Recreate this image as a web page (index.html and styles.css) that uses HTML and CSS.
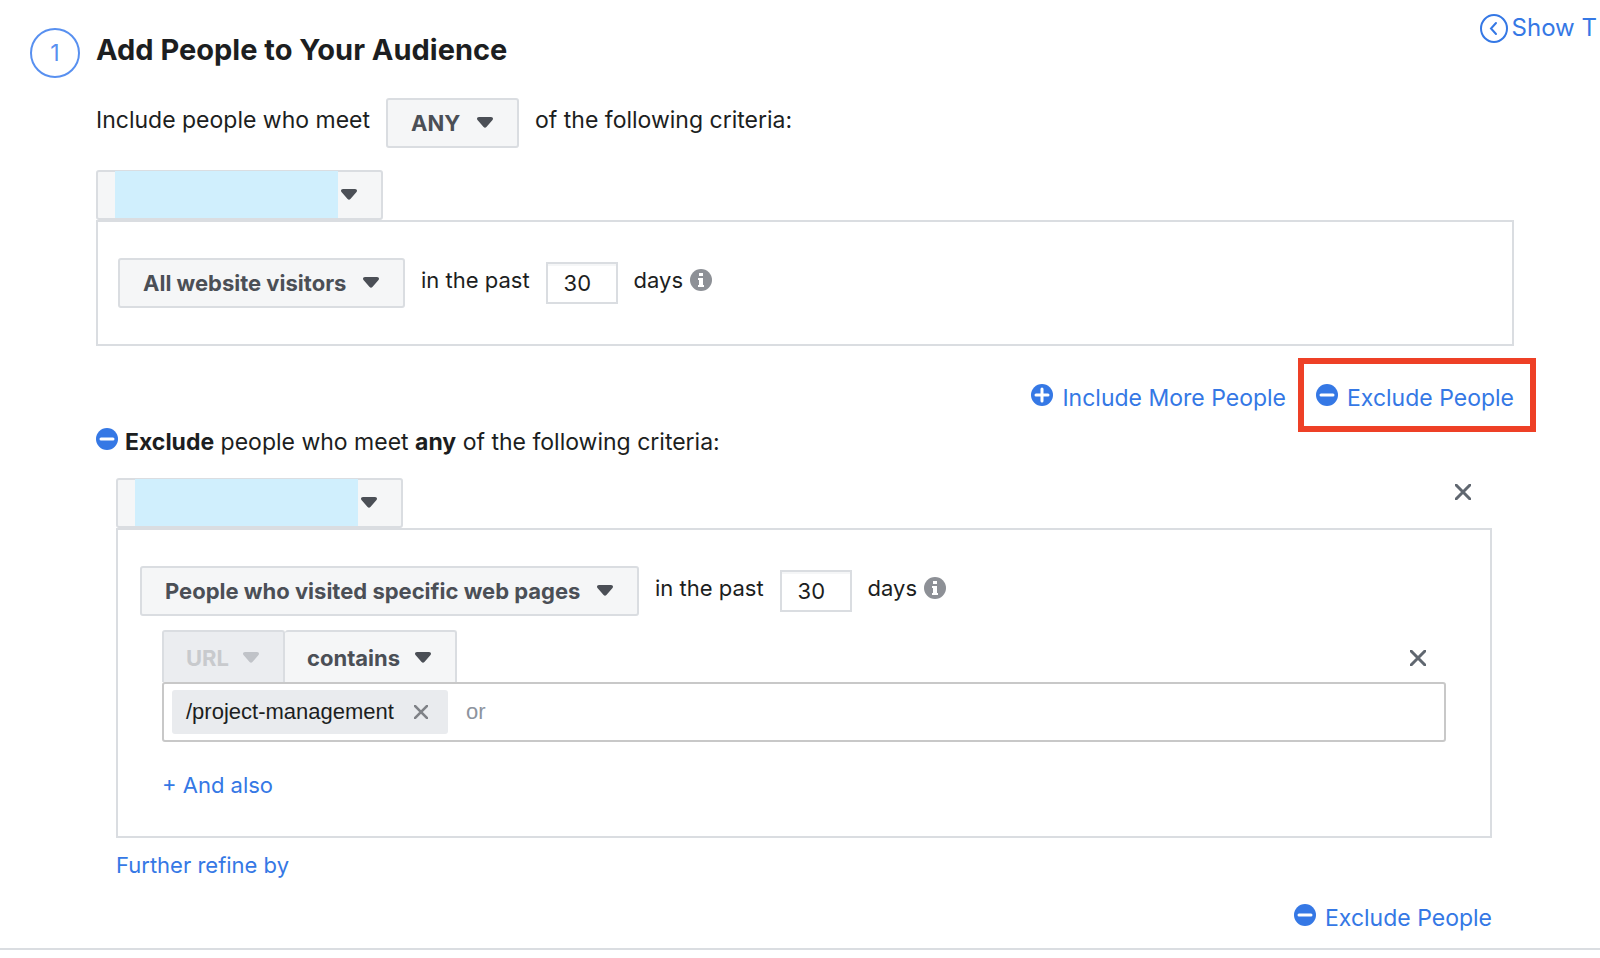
FILE: index.html
```
<!DOCTYPE html>
<html lang="en">
<head>
    <meta charset="UTF-8">
    <title>Create Audience</title>
    <link rel="stylesheet" href="styles.css">
</head>
<body>
<svg class="sprite" aria-hidden="true">
    <symbol id="caret" viewBox="0 0 16 11">
        <path d="M2 0h12c2 0 2.600 2 1.300 3.300L9.400 10q-1.400 1.300-2.800 0L.7 3.300C-.6 2 0 0 2 0z" fill="currentColor"/>
    </symbol>
    <symbol id="minus" viewBox="0 0 22 22">
        <circle cx="11" cy="11" r="11" fill="currentColor"/>
        <path d="M5 11h12" stroke="#fff" stroke-width="3" stroke-linecap="round"/>
    </symbol>
    <symbol id="plus" viewBox="0 0 22 22">
        <circle cx="11" cy="11" r="11" fill="currentColor"/>
        <path d="M5 11h12M11 5v12" stroke="#fff" stroke-width="3" stroke-linecap="round"/>
    </symbol>
    <symbol id="info" viewBox="0 0 22 22">
        <circle cx="11" cy="11" r="11" fill="currentColor"/>
        <path d="M9 4h4v3H9zM8 9h5v7h1v2H8v-2h1v-5H8z" fill="#fff"/>
    </symbol>
    <symbol id="cross" viewBox="0 0 16 16">
        <path d="M1 1l14 14M15 1L1 15" stroke="currentColor" stroke-width="3" stroke-linecap="round"/>
    </symbol>
</svg>

<main class="step">
    <a class="show-link" href="#">
        <svg width="28" height="29" viewBox="0 0 28 29" fill="none" stroke="currentColor" stroke-width="2">
            <ellipse cx="14" cy="14.500" rx="13" ry="13.500"/>
            <path d="M16 9l-5 5.500 5 5.500" stroke-linecap="round"/>
        </svg>
        Show T
    </a>
    <div class="step-number">1</div>
    <div class="step-content">
        <h1 class="title">Add People to Your Audience</h1>

        <div class="row include-row">
            <label class="row-text" for="match">Include people who meet</label>
            <span class="dropdown">
                <select id="match"><option>ANY</option></select>
                <svg class="caret"><use href="#caret"/></svg>
            </span>
            <span class="row-text">of the following criteria:</span>
        </div>

        <span class="dropdown source">
            <select aria-label="Source"><option></option></select>
            <span class="source-mask"></span>
            <svg class="caret"><use href="#caret"/></svg>
        </span>
        <section class="panel">
            <div class="row">
                <span class="dropdown">
                    <select aria-label="Visitors"><option>All website visitors</option></select>
                    <svg class="caret"><use href="#caret"/></svg>
                </span>
                <label class="row-text small" for="days-in">in the past</label>
                <input class="days" id="days-in" type="text" value="30">
                <span class="row-text small">days <svg class="icon info"><use href="#info"/></svg></span>
            </div>
        </section>

        <div class="actions">
            <a class="action" href="#"><svg class="icon"><use href="#plus"/></svg>Include More People</a>
            <a class="action highlighted" href="#"><svg class="icon"><use href="#minus"/></svg>Exclude People</a>
        </div>

        <h2 class="exclude-title"><svg class="icon"><use href="#minus"/></svg><span><b>Exclude</b> people who meet <b>any</b> of the following criteria:</span></h2>

        <div class="exclude">
            <div class="exclude-head">
                <span class="dropdown source">
                    <select aria-label="Excluded source"><option></option></select>
                    <span class="source-mask"></span>
                    <svg class="caret"><use href="#caret"/></svg>
                </span>
                <button class="close" type="button" aria-label="Remove group"><svg><use href="#cross"/></svg></button>
            </div>
            <section class="panel">
                <div class="row">
                    <span class="dropdown">
                        <select aria-label="Excluded visitors"><option>People who visited specific web pages</option></select>
                        <svg class="caret"><use href="#caret"/></svg>
                    </span>
                    <label class="row-text small" for="days-ex">in the past</label>
                    <input class="days" id="days-ex" type="text" value="30">
                    <span class="row-text small">days <svg class="icon info"><use href="#info"/></svg></span>
                </div>
                <div class="rule">
                    <div class="rule-head">
                        <span class="dropdown">
                            <select aria-label="Field" disabled><option>URL</option></select>
                            <svg class="caret"><use href="#caret"/></svg>
                        </span>
                        <span class="dropdown">
                            <select aria-label="Operator"><option>contains</option></select>
                            <svg class="caret"><use href="#caret"/></svg>
                        </span>
                        <button class="close" type="button" aria-label="Remove rule"><svg><use href="#cross"/></svg></button>
                    </div>
                    <div class="tokens">
                        <span class="token">/project-management
                            <button class="close" type="button" aria-label="Remove value"><svg><use href="#cross"/></svg></button>
                        </span>
                        <input class="token-input" type="text" placeholder="or" aria-label="Add value">
                    </div>
                    <a class="text-link" href="#">+ And also</a>
                </div>
            </section>
            <a class="text-link refine" href="#">Further refine by</a>
            <div class="actions">
                <a class="action" href="#"><svg class="icon"><use href="#minus"/></svg>Exclude People</a>
            </div>
        </div>
    </div>
</main>
</body>
</html>
```
FILE: styles.css
```
*, ::before, ::after {
    box-sizing: border-box;
}

* {
    margin: 0;
}

body {
    background: #fff;
    color: #1c1e21;
    font-family: Inter, "Liberation Sans", sans-serif;
    font-size: 23px;
    line-height: 32px;
    overflow-x: hidden;
}

a {
    color: #3578e5;
    text-decoration: none;
}

svg {
    display: block;
    flex: none;
}

.sprite {
    position: absolute;
    width: 0;
    height: 0;
}

.step {
    position: relative;
    display: flex;
    gap: 15px;
    padding: 28px 86px 14px 30px;
    border-bottom: 2px solid #dadde1;
}

.show-link {
    position: absolute;
    top: 12px;
    right: 3px;
    display: flex;
    align-items: center;
    gap: 4px;
    font-size: 24px;
    white-space: nowrap;
}

.step-number {
    flex: none;
    width: 50px;
    height: 50px;
    border: 2px solid #5890f0;
    border-radius: 50%;
    color: #5890f0;
    line-height: 46px;
    text-align: center;
}

.step-content {
    flex: 1;
    min-width: 0;
}

.title {
    padding-top: 4px;
    font-size: 29px;
    font-weight: 700;
    line-height: 36px;
}

.row {
    display: flex;
    align-items: center;
    gap: 16px;
}

.include-row {
    margin: 30px 0 22px;
}

.row-text {
    display: flex;
    align-items: center;
    gap: 7px;
    padding-bottom: 6px;
    white-space: nowrap;
}

.small {
    font-size: 22px;
}

.dropdown {
    position: relative;
    display: block;
    width: fit-content;
    color: #4b4f56;
}

.dropdown select {
    display: block;
    height: 50px;
    padding: 0 56px 0 23px;
    border: 2px solid #dadde1;
    border-radius: 3px;
    background: #f5f6f7;
    color: inherit;
    font: 700 22px/32px Inter, "Liberation Sans", sans-serif;
    appearance: none;
    opacity: 1;
}

.caret {
    position: absolute;
    top: 19px;
    right: 26px;
    width: 16px;
    height: 11px;
    pointer-events: none;
}

.source select {
    width: 287px;
}

.source-mask {
    position: absolute;
    top: 1px;
    left: 19px;
    width: 223px;
    height: 47px;
    background: #d0effd;
}

.panel {
    padding: 36px 20px;
    border: 2px solid #dadde1;
}

.step-content {
    padding-left: 1px;
}

.days {
    width: 72px;
    height: 42px;
    padding: 0 16px;
    border: 2px solid #dadde1;
    box-shadow: inset 0 2px #f5f6f7;
    color: inherit;
    font: 22px/32px Inter, "Liberation Sans", sans-serif;
}

.icon {
    width: 22px;
    height: 22px;
}

.info {
    color: #8d9096;
}

.actions {
    display: flex;
    justify-content: flex-end;
    gap: 30px;
    margin-top: 36px;
}

.action {
    position: relative;
    display: flex;
    gap: 9px;
}

.action .icon,
.exclude-title .icon {
    margin-top: 2px;
}

.highlighted::after {
    content: "";
    position: absolute;
    inset: -24px -22px -18px -18px;
    border: 6px solid #ee4026;
}

.exclude-title {
    display: flex;
    gap: 7px;
    margin: 12px 0 20px;
    font-size: 23px;
    font-weight: 400;
}

.exclude-title .icon {
    color: #3578e5;
}

.exclude-title b {
    font-weight: 700;
}

.exclude {
    padding: 0 22px 0 20px;
}

.exclude .panel {
    padding: 36px 22px;
}

.exclude-head,
.rule-head {
    display: flex;
    justify-content: space-between;
}

.close {
    padding: 6px;
    border: 0;
    background: none;
    color: #606770;
}

.close svg {
    width: 16px;
    height: 16px;
}

.exclude-head .close {
    align-self: flex-start;
    margin-right: 15px;
}

.rule {
    padding: 14px 22px 0;
}

.rule-head .dropdown select {
    height: 52px;
    padding: 2px 54px 0 22px;
    border-bottom: 0;
    border-radius: 3px 3px 0 0;
}

.rule-head .dropdown + .dropdown select {
    border-left: 0;
}

.rule-head .caret {
    top: 22px;
}

.rule-head select:disabled {
    background: #ebedf0;
    color: #c8cacd;
}

.rule-head select:disabled + .caret {
    color: #c0c3c8;
}

.rule-head .close {
    margin: 4px 14px 0 auto;
}

.tokens {
    display: flex;
    align-items: center;
    gap: 16px;
    height: 60px;
    padding: 0 8px;
    border: 2px solid #c8c8c8;
    border-radius: 3px;
    font: 22px/32px "Liberation Sans", Arial, sans-serif;
}

.token {
    display: flex;
    align-items: center;
    gap: 14px;
    height: 44px;
    padding: 0 14px;
    border-radius: 3px;
    background: #e9ebee;
}

.token .close {
    color: #7f8287;
}

.token .close svg {
    width: 14px;
    height: 14px;
}

.token-input {
    flex: 1;
    border: 0;
    color: inherit;
    font: inherit;
}

.token-input::placeholder {
    color: #8d949e;
}

.text-link {
    display: block;
    font-size: 22px;
    line-height: 30px;
}

.rule .text-link {
    padding-top: 28px;
}

.refine {
    margin-top: 12px;
}

.refine + .actions {
    margin-top: 22px;
}
```
